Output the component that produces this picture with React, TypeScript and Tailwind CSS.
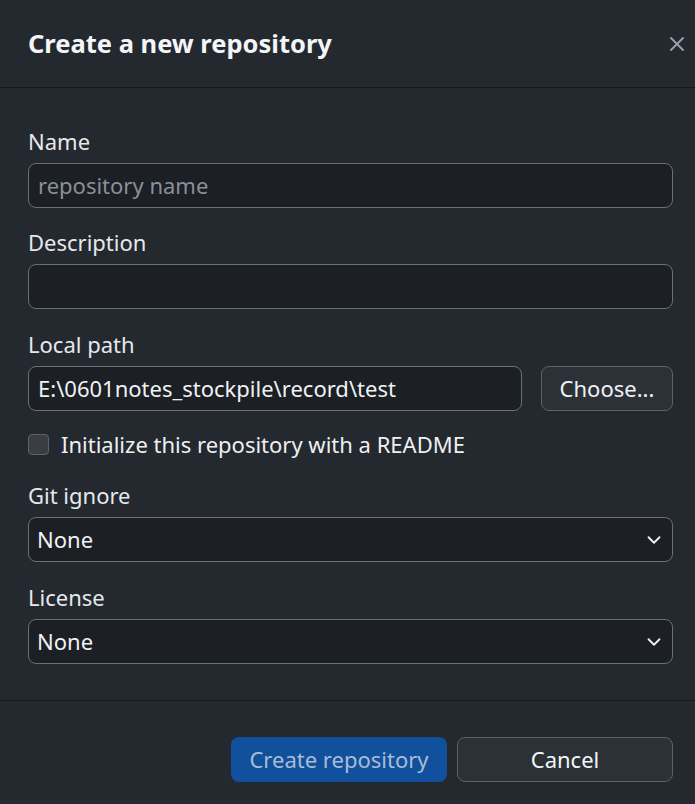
import { ChevronDown, X } from "lucide-react";

const font = { fontFamily: '"Noto Sans", "Open Sans", sans-serif' };

function Label({ children }: { children: React.ReactNode }) {
  return <div className="text-[22px] leading-[28px] text-[#e6e9ec] mb-[8px]">{children}</div>;
}

function Select({ value }: { value: string }) {
  return (
    <div className="flex h-[45px] items-center justify-between rounded-[8px] border border-[#6b7078] bg-[#1c1f24] pl-[8px] pr-[7px]">
      <span className="text-[22px] text-[#f0f2f4]">{value}</span>
      <ChevronDown size={22} strokeWidth={2} className="text-[#f0f2f4]" />
    </div>
  );
}

export default function App() {
  return (
    <div className="h-[804px] w-[695px] bg-[#24282f] flex flex-col" style={font}>
      {/* header */}
      <div className="flex h-[88px] items-center justify-between border-b border-[#15181c] pl-[28px] pr-[6px]">
        <h1 className="text-[25.5px] font-bold text-[#f3f5f7]">Create a new repository</h1>
        <X size={24} strokeWidth={2} className="text-[#9aa0a7]" />
      </div>

      {/* body */}
      <div className="flex flex-col pl-[28px] pr-[22px] pt-[39px] h-[613px] border-b border-[#15181c]">
        <Label>Name</Label>
        <div className="flex h-[45px] items-center rounded-[8px] border border-[#6b7078] bg-[#1c1f24] px-[9px]">
          <span className="text-[22px] text-[#8a9098]">repository name</span>
        </div>

        <div className="mt-[20px]">
          <Label>Description</Label>
          <div className="h-[45px] rounded-[8px] border border-[#6b7078] bg-[#1c1f24]" />
        </div>

        <div className="mt-[21px]">
          <Label>Local path</Label>
          <div className="flex gap-[19px]">
            <div className="flex h-[45px] flex-1 items-center rounded-[8px] border border-[#6b7078] bg-[#1c1f24] px-[9px]">
              <span className="text-[22px] text-[#f0f2f4]">E:\0601notes_stockpile\record\test</span>
            </div>
            <div className="flex h-[45px] w-[132px] items-center justify-center rounded-[8px] border border-[#5d6269] bg-[#2c3037] text-[22px] text-[#f0f2f4]">
              Choose...
            </div>
          </div>
        </div>

        <div className="mt-[13px] flex items-center gap-[12px] h-[40px]">
          <div className="h-[21px] w-[21px] rounded-[4px] border border-[#5e6167] bg-[#3a3d42]" />
          <span className="text-[22px] text-[#eef0f2]">Initialize this repository with a README</span>
        </div>

        <div className="mt-[17px]">
          <Label>Git ignore</Label>
          <Select value="None" />
        </div>

        <div className="mt-[21px]">
          <Label>License</Label>
          <Select value="None" />
        </div>
      </div>

      {/* footer */}
      <div className="flex flex-1 items-start justify-end gap-[10px] pr-[22px] pt-[36px]">
        <div className="flex h-[45px] w-[216px] items-center justify-center rounded-[8px] bg-[#11509c] text-[22px] text-[#a9bdd6]">
          Create repository
        </div>
        <div className="flex h-[45px] w-[216px] items-center justify-center rounded-[8px] border border-[#5d6269] bg-[#2c3037] text-[22px] text-[#f3f5f7]">
          Cancel
        </div>
      </div>
    </div>
  );
}
